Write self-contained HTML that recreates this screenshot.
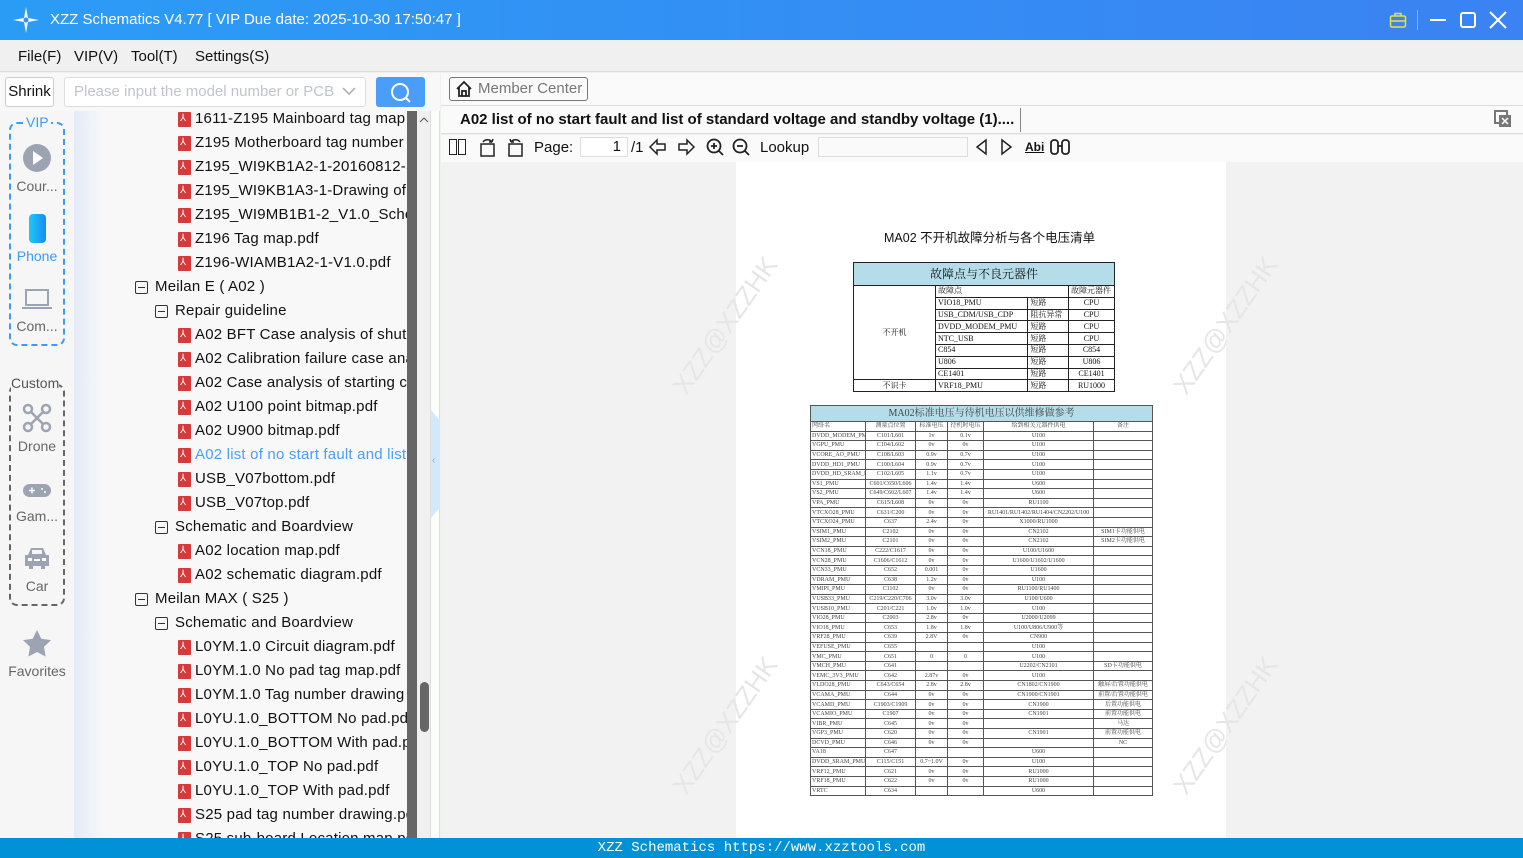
<!DOCTYPE html>
<html><head><meta charset="utf-8"><style>
*{margin:0;padding:0;box-sizing:border-box}
body{width:1523px;height:858px;overflow:hidden;font-family:"Liberation Sans","Noto Sans CJK SC",sans-serif;background:#f0f0f0;position:relative;color:#111}
.abs{position:absolute}
#title{left:0;top:0;width:1523px;height:40px;background:linear-gradient(90deg,#2b9cf6,#3b82f2);color:#fff;font-size:15px}
#menu{left:0;top:40px;width:1523px;height:32px;background:#f0f0f0;border-bottom:1px solid #ddd;font-size:15px}
#menu span{position:absolute;top:8px}
#side{left:0;top:111px;width:74px;height:727px;background:#f6f6f6}
#tree{left:74px;top:111px;width:334px;height:727px;background:linear-gradient(90deg,#e4ebf7 0,#f8f8f8 30px,#f8f8f8);overflow:hidden}
.it{position:absolute;font-size:15px;white-space:nowrap;height:24px;line-height:24px;letter-spacing:0.2px}
.pdf{position:absolute;width:13px;height:15px;background:#d63a3a;border-radius:1px;top:5px;overflow:hidden}
.pdf:after{content:"⅄";position:absolute;left:2px;top:-5px;color:#fff;font-size:10px;font-style:normal}
.tg{position:absolute;width:13px;height:13px;border:1px solid #333;border-radius:2px;top:6px}
.tg:after{content:"";position:absolute;left:2px;top:5px;width:7px;height:1px;background:#333}
.sl{position:absolute;font-size:14px;color:#666;width:74px;text-align:center}
#pdfarea{left:441px;top:162px;width:1082px;height:676px;background:#f2f2f2}
#page{left:736px;top:162px;width:490px;height:676px;background:#fff}
.wm{position:absolute;font-size:26px;color:#e6e6e6;transform:rotate(-55deg);white-space:nowrap}
table{border-collapse:collapse;font-family:"Liberation Serif","Noto Serif CJK SC",serif}
#t1 td{border:1px solid #222;font-size:8px;height:11.8px;padding:0 2px;line-height:10px}
#t2 td{border:1px solid #555;font-size:6px;height:9.6px;padding:0 1px;line-height:8px;text-align:center;color:#444;white-space:nowrap;overflow:hidden}
#t2 td:first-child{text-align:left}
.r{color:#e33}
</style></head><body>
<div id="title" class="abs">
 <svg class="abs" style="left:12px;top:6px" width="28" height="28" viewBox="0 0 28 28"><path d="M14 1 L16 12 L27 14 L16 16 L14 27 L12 16 L1 14 L12 12Z" fill="#fff"/><circle cx="14" cy="14" r="2.5" fill="#3b8ff3"/></svg>
 <span class="abs" style="left:50px;top:11px">XZZ Schematics V4.77 [ VIP Due date: 2025-10-30 17:50:47 ]</span>
 <svg class="abs" style="left:1389px;top:11px" width="18" height="18" viewBox="0 0 18 18" fill="none" stroke="#e7e43a" stroke-width="1.5"><rect x="1.5" y="5" width="15" height="11" rx="1.5"/><path d="M6 5V2.5h6V5M1.5 10h15"/></svg>
 <div class="abs" style="left:1417px;top:10px;width:1px;height:20px;background:#7fb8f7"></div>
 <div class="abs" style="left:1430px;top:19px;width:16px;height:2px;background:#fff"></div>
 <div class="abs" style="left:1460px;top:12px;width:16px;height:16px;border:2px solid #fff;border-radius:3px"></div>
 <svg class="abs" style="left:1489px;top:11px" width="18" height="18"><path d="M1 1L17 17M17 1L1 17" stroke="#fff" stroke-width="2"/></svg>
</div>
<div id="menu" class="abs"><span style="left:18px">File(F)</span><span style="left:74px">VIP(V)</span><span style="left:131px">Tool(T)</span><span style="left:195px">Settings(S)</span></div>
<div class="abs" style="left:0;top:73px;width:440px;height:38px;background:#f8f8f8"></div>
<div class="abs" style="left:5px;top:77px;width:49px;height:30px;border:1px solid #ccc;border-radius:3px;background:#fff;font-size:15px;line-height:28px;text-align:center">Shrink</div>
<div class="abs" style="left:64px;top:77px;width:302px;height:30px;border:1px solid #ddd;border-radius:3px;background:#fff;font-size:15px;line-height:28px;padding-left:9px;color:#c0c4cc">Please input the model number or PCB</div>
<svg class="abs" style="left:342px;top:86px" width="14" height="10"><path d="M1 2l6 6 6-6" stroke="#aaa" stroke-width="1.5" fill="none"/></svg>
<div class="abs" style="left:376px;top:77px;width:49px;height:30px;border-radius:3px;background:#4a9ef9"></div>
<svg class="abs" style="left:389px;top:82px" width="24" height="22" fill="none" stroke="#fff" stroke-width="2"><circle cx="11" cy="10" r="8"/><path d="M17 16l4 4"/></svg>
<div id="side" class="abs"></div>
<div class="abs" style="left:9px;top:122px;width:56px;height:224px;border:2px dashed #3d9bf5;border-radius:8px"></div>
<div class="abs" style="left:24px;top:114px;background:#f6f6f6;color:#3d9bf5;font-size:14px;padding:0 2px">VIP</div>
<svg class="abs" style="left:23px;top:144px" width="28" height="28"><circle cx="14" cy="14" r="14" fill="#9ca3b3"/><path d="M10 7l10 7-10 7z" fill="#fff"/></svg>
<div class="sl" style="top:178px">Cour...</div>
<div class="abs" style="left:29px;top:214px;width:17px;height:29px;border-radius:4px;background:linear-gradient(90deg,#1ec8f8,#1a8af5)"></div>
<div class="sl" style="top:248px;color:#3d9bf5">Phone</div>
<svg class="abs" style="left:22px;top:288px" width="30" height="22" fill="none" stroke="#9ca3b3" stroke-width="2"><rect x="4" y="2" width="22" height="15"/><path d="M0 20h30"/></svg>
<div class="sl" style="top:318px">Com...</div>
<div class="abs" style="left:9px;top:384px;width:56px;height:222px;border:2px dashed #666;border-radius:8px"></div>
<div class="abs" style="left:11px;top:375px;background:#f6f6f6;color:#555;font-size:14px">Custom</div>
<svg class="abs" style="left:22px;top:403px" width="30" height="30" fill="none" stroke="#9ca3b3" stroke-width="2.5"><circle cx="6" cy="6" r="4"/><circle cx="24" cy="6" r="4"/><circle cx="6" cy="24" r="4"/><circle cx="24" cy="24" r="4"/><path d="M9 9l12 12M21 9L9 21"/></svg>
<div class="sl" style="top:438px">Drone</div>
<svg class="abs" style="left:23px;top:484px" width="28" height="13"><rect width="28" height="13" rx="6.5" fill="#9ca3b3"/><path d="M6 6.5h6M9 3.5v6" stroke="#fff" stroke-width="1.5"/><circle cx="19" cy="5" r="1" fill="#fff"/><circle cx="22" cy="8" r="1" fill="#fff"/></svg>
<div class="sl" style="top:508px">Gam...</div>
<svg class="abs" style="left:23px;top:546px" width="28" height="24"><path d="M5 9l3-7h12l3 7h3v11h-4v3h-4v-3H10v3H6v-3H2V9z" fill="#9ca3b3"/><rect x="5" y="12" width="4" height="3" fill="#fff"/><rect x="19" y="12" width="4" height="3" fill="#fff"/><rect x="11" y="13" width="6" height="2" fill="#fff"/><rect x="9" y="4" width="10" height="4" fill="#f6f6f6"/></svg>
<div class="sl" style="top:578px">Car</div>
<svg class="abs" style="left:22px;top:629px" width="30" height="28"><path d="M15 1l4.3 8.7 9.7 1.4-7 6.8 1.6 9.6L15 23l-8.6 4.5 1.6-9.6-7-6.8 9.7-1.4z" fill="#9ca3b3"/></svg>
<div class="sl" style="top:663px">Favorites</div>
<div id="tree" class="abs">
<div class="it" style="left:104px;top:-4px"><i class="pdf" style="left:0"></i><span style="margin-left:17px">1611-Z195 Mainboard tag map</span></div>
<div class="it" style="left:104px;top:20px"><i class="pdf"></i><span style="margin-left:17px">Z195 Motherboard tag number</span></div>
<div class="it" style="left:104px;top:44px"><i class="pdf"></i><span style="margin-left:17px">Z195_WI9KB1A2-1-20160812-Sc</span></div>
<div class="it" style="left:104px;top:68px"><i class="pdf"></i><span style="margin-left:17px">Z195_WI9KB1A3-1-Drawing of s</span></div>
<div class="it" style="left:104px;top:92px"><i class="pdf"></i><span style="margin-left:17px">Z195_WI9MB1B1-2_V1.0_Schem</span></div>
<div class="it" style="left:104px;top:116px"><i class="pdf"></i><span style="margin-left:17px">Z196 Tag map.pdf</span></div>
<div class="it" style="left:104px;top:140px"><i class="pdf"></i><span style="margin-left:17px">Z196-WIAMB1A2-1-V1.0.pdf</span></div>
<div class="it" style="left:61px;top:164px"><i class="tg"></i><span style="margin-left:20px">Meilan E ( A02 )</span></div>
<div class="it" style="left:81px;top:188px"><i class="tg"></i><span style="margin-left:20px">Repair guideline</span></div>
<div class="it" style="left:104px;top:212px"><i class="pdf"></i><span style="margin-left:17px">A02 BFT Case analysis of shutdo</span></div>
<div class="it" style="left:104px;top:236px"><i class="pdf"></i><span style="margin-left:17px">A02 Calibration failure case ana</span></div>
<div class="it" style="left:104px;top:260px"><i class="pdf"></i><span style="margin-left:17px">A02 Case analysis of starting cu</span></div>
<div class="it" style="left:104px;top:284px"><i class="pdf"></i><span style="margin-left:17px">A02 U100 point bitmap.pdf</span></div>
<div class="it" style="left:104px;top:308px"><i class="pdf"></i><span style="margin-left:17px">A02 U900 bitmap.pdf</span></div>
<div class="it" style="left:104px;top:332px"><i class="pdf"></i><span style="margin-left:17px;color:#4a9ef9">A02 list of no start fault and list</span></div>
<div class="it" style="left:104px;top:356px"><i class="pdf"></i><span style="margin-left:17px">USB_V07bottom.pdf</span></div>
<div class="it" style="left:104px;top:380px"><i class="pdf"></i><span style="margin-left:17px">USB_V07top.pdf</span></div>
<div class="it" style="left:81px;top:404px"><i class="tg"></i><span style="margin-left:20px">Schematic and Boardview</span></div>
<div class="it" style="left:104px;top:428px"><i class="pdf"></i><span style="margin-left:17px">A02 location map.pdf</span></div>
<div class="it" style="left:104px;top:452px"><i class="pdf"></i><span style="margin-left:17px">A02 schematic diagram.pdf</span></div>
<div class="it" style="left:61px;top:476px"><i class="tg"></i><span style="margin-left:20px">Meilan MAX ( S25 )</span></div>
<div class="it" style="left:81px;top:500px"><i class="tg"></i><span style="margin-left:20px">Schematic and Boardview</span></div>
<div class="it" style="left:104px;top:524px"><i class="pdf"></i><span style="margin-left:17px">L0YM.1.0 Circuit diagram.pdf</span></div>
<div class="it" style="left:104px;top:548px"><i class="pdf"></i><span style="margin-left:17px">L0YM.1.0 No pad tag map.pdf</span></div>
<div class="it" style="left:104px;top:572px"><i class="pdf"></i><span style="margin-left:17px">L0YM.1.0 Tag number drawing v</span></div>
<div class="it" style="left:104px;top:596px"><i class="pdf"></i><span style="margin-left:17px">L0YU.1.0_BOTTOM No pad.pdf</span></div>
<div class="it" style="left:104px;top:620px"><i class="pdf"></i><span style="margin-left:17px">L0YU.1.0_BOTTOM With pad.pdf</span></div>
<div class="it" style="left:104px;top:644px"><i class="pdf"></i><span style="margin-left:17px">L0YU.1.0_TOP No pad.pdf</span></div>
<div class="it" style="left:104px;top:668px"><i class="pdf"></i><span style="margin-left:17px">L0YU.1.0_TOP With pad.pdf</span></div>
<div class="it" style="left:104px;top:692px"><i class="pdf"></i><span style="margin-left:17px">S25 pad tag number drawing.pdf</span></div>
<div class="it" style="left:104px;top:716px"><i class="pdf"></i><span style="margin-left:17px">S25 sub-board Location map.pdf</span></div>
</div>
<div class="abs" style="left:407px;top:111px;width:10px;height:727px;background:#666"></div>
<div class="abs" style="left:417px;top:111px;width:13px;height:727px;background:#f0f0f0"></div>
<svg class="abs" style="left:419px;top:116px" width="10" height="8"><path d="M1 6l4-4 4 4" stroke="#555" fill="none"/></svg>
<div class="abs" style="left:420px;top:682px;width:9px;height:50px;background:#666;border-radius:5px"></div>
<div class="abs" style="left:430px;top:111px;width:10px;height:727px;background:#fcfefc;border-left:1px solid #ddd;border-right:1px solid #ddd"></div>
<div class="abs" style="left:431px;top:410px;width:9px;height:108px;background:#d4e8fc;clip-path:polygon(0 0,100% 10%,100% 90%,0 100%)"></div>
<div class="abs" style="left:432px;top:455px;font-size:10px;color:#6ab0f7">‹</div>
<div class="abs" style="left:441px;top:73px;width:1082px;height:33px;background:#fafafa;border-bottom:1px solid #ddd"></div>
<div class="abs" style="left:449px;top:77px;width:139px;height:24px;border:1px solid #777;border-radius:3px;background:#fafafa;font-size:15px;color:#777;line-height:22px;padding-left:28px">Member Center</div>
<svg class="abs" style="left:455px;top:80px" width="18" height="18" fill="none" stroke="#222" stroke-width="1.8"><path d="M2 9L9 2l7 7M4 7v9h10V7M7 16v-5h4v5"/></svg>
<div class="abs" style="left:441px;top:106px;width:1082px;height:28px;background:#fafafa;border-bottom:1px solid #ddd"></div>
<div class="abs" style="left:460px;top:111px;font-size:15px;font-weight:bold">A02 list of no start fault and list of standard voltage and standby voltage (1)....</div>
<div class="abs" style="left:1020px;top:108px;width:1px;height:24px;background:#888"></div>
<svg class="abs" style="left:1494px;top:110px" width="18" height="18"><rect x="1" y="1" width="12" height="12" fill="none" stroke="#777" stroke-width="2"/><rect x="5" y="5" width="12" height="12" fill="#777"/><path d="M8 8l6 6M14 8l-6 6" stroke="#fff" stroke-width="1.5"/></svg>
<div class="abs" style="left:441px;top:135px;width:1082px;height:27px;background:#fafafa"></div>
<div class="abs" style="left:449px;top:139px;width:8px;height:16px;border:1.5px solid #222"></div><div class="abs" style="left:458px;top:139px;width:8px;height:16px;border:1.5px solid #222"></div>
<svg class="abs" style="left:478px;top:137px" width="48" height="20" fill="none" stroke="#222" stroke-width="1.5"><rect x="3" y="7" width="13" height="12"/><path d="M5 5c2-3 7-3 9 0M14 5l1-3M14 5l-3 0"/><rect x="31" y="7" width="13" height="12"/><path d="M42 5c-2-3-7-3-9 0M33 5l-1-3M33 5l3 0"/></svg>
<div class="abs" style="left:534px;top:139px;font-size:15px">Page:</div>
<div class="abs" style="left:580px;top:137px;width:48px;height:20px;border:1px solid #ddd;background:#fff;font-size:15px;text-align:right;padding-right:6px">1</div>
<div class="abs" style="left:631px;top:139px;font-size:15px">/1</div>
<svg class="abs" style="left:648px;top:138px" width="48" height="18" fill="none" stroke="#222" stroke-width="1.5"><path d="M2 9l7-7v4h8v6H9v4zM46 9l-7-7v4h-8v6h8v4z"/></svg>
<svg class="abs" style="left:705px;top:138px" width="48" height="18" fill="none" stroke="#222" stroke-width="1.8"><circle cx="9" cy="8" r="6.5"/><path d="M14 13l4 4M6 8h6M9 5v6"/><circle cx="35" cy="8" r="6.5"/><path d="M40 13l4 4M32 8h6"/></svg>
<div class="abs" style="left:760px;top:139px;font-size:15px">Lookup</div>
<div class="abs" style="left:818px;top:137px;width:150px;height:20px;border:1px solid #ddd;background:#fafafa"></div>
<svg class="abs" style="left:974px;top:138px" width="40" height="18" fill="none" stroke="#222" stroke-width="1.5"><path d="M12 2L3 9l9 7zM28 2l9 7-9 7z"/></svg>
<div class="abs" style="left:1025px;top:140px;font-size:12px;font-weight:bold;text-decoration:underline">Abi</div>
<svg class="abs" style="left:1049px;top:138px" width="22" height="18" fill="none" stroke="#222" stroke-width="1.8"><rect x="2" y="2" width="7" height="14" rx="3"/><rect x="13" y="2" width="7" height="14" rx="3"/><path d="M9 8h4"/></svg>
<div id="pdfarea" class="abs"></div>
<div id="page" class="abs"></div>
<div class="wm" style="left:645px;top:310px">XZZ@XZZHK</div>
<div class="wm" style="left:1145px;top:310px">XZZ@XZZHK</div>
<div class="wm" style="left:645px;top:710px">XZZ@XZZHK</div>
<div class="wm" style="left:1145px;top:710px">XZZ@XZZHK</div>
<div class="abs" style="left:884px;top:227px;font-size:12.5px">MA02 不开机故障分析与各个电压清单</div>
<table id="t1" class="abs" style="left:853px;top:262px;width:262px">
<tr><td colspan="4" style="background:#b4dde9;text-align:center;font-size:12px;height:23px">故障点与不良元器件</td></tr>
<tr><td rowspan="8" style="text-align:center;width:82px">不开机</td><td colspan="2">故障点</td><td style="width:46px">故障元器件</td></tr>
<tr><td>VIO18_PMU</td><td>短路</td><td align="center">CPU</td></tr>
<tr><td>USB_CDM/USB_CDP</td><td>阻抗异常</td><td align="center">CPU</td></tr>
<tr><td>DVDD_MODEM_PMU</td><td>短路</td><td align="center">CPU</td></tr>
<tr><td>NTC_USB</td><td>短路</td><td align="center">CPU</td></tr>
<tr><td>C854</td><td>短路</td><td align="center">C854</td></tr>
<tr><td>U806</td><td>短路</td><td align="center">U806</td></tr>
<tr><td>CE1401</td><td>短路</td><td align="center">CE1401</td></tr>
<tr><td align="center">不识卡</td><td>VRF18_PMU</td><td>短路</td><td align="center">RU1000</td></tr>
</table>
<table id="t2" class="abs" style="left:810px;top:405px;width:342px;table-layout:fixed">
<colgroup><col style="width:55px"><col style="width:50px"><col style="width:32px"><col style="width:36px"><col style="width:110px"><col style="width:59px"></colgroup>
<tr><td colspan="6" style="background:#b4dde9;text-align:center;font-size:10px;height:16px">MA02标准电压与待机电压以供维修做参考</td></tr>
<tr><td>网络名</td><td>测量点位置</td><td>标准电压</td><td>待机时电压</td><td>给到相关元器件供电</td><td>备注</td></tr>
<tr><td>DVDD_MODEM_PMU</td><td>C101/L601</td><td>1v</td><td>0.1v</td><td>U100</td><td></td></tr>
<tr><td>VGPU_PMU</td><td>C104/L602</td><td>0v</td><td>0v</td><td>U100</td><td></td></tr>
<tr><td>VCORE_AO_PMU</td><td>C108/L603</td><td>0.9v</td><td>0.7v</td><td>U100</td><td></td></tr>
<tr><td>DVDD_HD1_PMU</td><td>C100/L604</td><td>0.9v</td><td>0.7v</td><td>U100</td><td></td></tr>
<tr><td>DVDD_HD_SRAM_PMU</td><td>C102/L605</td><td>1.1v</td><td>0.7v</td><td>U100</td><td></td></tr>
<tr><td>VS1_PMU</td><td>C601/C650/L606</td><td>1.4v</td><td>1.4v</td><td>U600</td><td></td></tr>
<tr><td>VS2_PMU</td><td>C649/C602/L607</td><td>1.4v</td><td>1.4v</td><td>U600</td><td></td></tr>
<tr><td>VPA_PMU</td><td>C615/L608</td><td>0v</td><td>0v</td><td>RU1100</td><td></td></tr>
<tr><td>VTCXO28_PMU</td><td>C631/C200</td><td>0v</td><td>0v</td><td>RU1401/RU1402/RU1404/CN2202/U100</td><td></td></tr>
<tr><td>VTCXO24_PMU</td><td>C637</td><td>2.4v</td><td>0v</td><td>X1000/RU1000</td><td></td></tr>
<tr><td>VSIM1_PMU</td><td>C2102</td><td>0v</td><td>0v</td><td>CN2102</td><td>SIM1卡功能供电</td></tr>
<tr><td>VSIM2_PMU</td><td>C2101</td><td>0v</td><td>0v</td><td>CN2102</td><td>SIM2卡功能供电</td></tr>
<tr><td>VCN18_PMU</td><td class="r">C222/C1617</td><td>0v</td><td>0v</td><td>U100/U1600</td><td></td></tr>
<tr><td>VCN28_PMU</td><td class="r">C1606/C1612</td><td>0v</td><td>0v</td><td>U1600/U1602/U1600</td><td></td></tr>
<tr><td>VCN33_PMU</td><td>C652</td><td>0.001</td><td>0v</td><td>U1600</td><td></td></tr>
<tr><td>VDRAM_PMU</td><td>C638</td><td>1.2v</td><td>0v</td><td>U100</td><td></td></tr>
<tr><td>VMIPI_PMU</td><td class="r">C1102</td><td>0v</td><td>0v</td><td>RU1100/RU1400</td><td></td></tr>
<tr><td>VUSB33_PMU</td><td>C219/C220/C706</td><td>3.0v</td><td>3.0v</td><td>U100/U600</td><td></td></tr>
<tr><td>VUSB10_PMU</td><td>C201/C221</td><td>1.0v</td><td>1.0v</td><td>U100</td><td></td></tr>
<tr><td>VIO28_PMU</td><td>C2003</td><td>2.8v</td><td>0v</td><td>U2000/U2099</td><td></td></tr>
<tr><td>VIO18_PMU</td><td>C653</td><td>1.8v</td><td>1.8v</td><td>U100/U806/U900等</td><td></td></tr>
<tr><td>VRF28_PMU</td><td>C639</td><td>2.8V</td><td>0v</td><td>CN900</td><td></td></tr>
<tr><td>VEFUSE_PMU</td><td>C655</td><td></td><td></td><td>U100</td><td></td></tr>
<tr><td>VMC_PMU</td><td>C651</td><td>0</td><td>0</td><td>U100</td><td></td></tr>
<tr><td>VMCH_PMU</td><td>C641</td><td></td><td></td><td>U2202/CN2101</td><td>SD卡功能供电</td></tr>
<tr><td>VEMC_3V3_PMU</td><td>C642</td><td>2.87v</td><td>0v</td><td>U100</td><td></td></tr>
<tr><td>VLDO28_PMU</td><td>C643/C654</td><td>2.8v</td><td>2.8v</td><td>CN1802/CN1900</td><td>触屏/后置功能供电</td></tr>
<tr><td>VCAMA_PMU</td><td>C644</td><td>0v</td><td>0v</td><td>CN1900/CN1901</td><td>前置/后置功能供电</td></tr>
<tr><td>VCAMD_PMU</td><td>C1903/C1909</td><td>0v</td><td>0v</td><td>CN1900</td><td>后置功能供电</td></tr>
<tr><td>VCAMIO_PMU</td><td>C1907</td><td>0v</td><td>0v</td><td>CN1901</td><td>前置功能供电</td></tr>
<tr><td>VIBR_PMU</td><td>C645</td><td>0v</td><td>0v</td><td></td><td>马达</td></tr>
<tr><td>VGP3_PMU</td><td>C620</td><td>0v</td><td>0v</td><td>CN1901</td><td>前置功能供电</td></tr>
<tr><td>DCVD_PMU</td><td>C646</td><td>0v</td><td>0v</td><td></td><td>NC</td></tr>
<tr><td>VA18</td><td>C647</td><td></td><td></td><td>U600</td><td></td></tr>
<tr><td>DVDD_SRAM_PMU</td><td>C115/C151</td><td>0.7~1.0V</td><td>0v</td><td>U100</td><td></td></tr>
<tr><td>VRF12_PMU</td><td>C621</td><td>0v</td><td>0v</td><td>RU1000</td><td></td></tr>
<tr><td>VRF18_PMU</td><td>C622</td><td>0v</td><td>0v</td><td>RU1000</td><td></td></tr>
<tr><td>VRTC</td><td>C634</td><td></td><td></td><td>U600</td><td></td></tr>
</table>
<div class="abs" style="left:0;top:838px;width:1523px;height:20px;background:#0091d6;color:#fff;font-family:'Liberation Mono',monospace;font-size:14px;text-align:center;line-height:20px">XZZ Schematics https://www.xzztools.com</div>
</body></html>
